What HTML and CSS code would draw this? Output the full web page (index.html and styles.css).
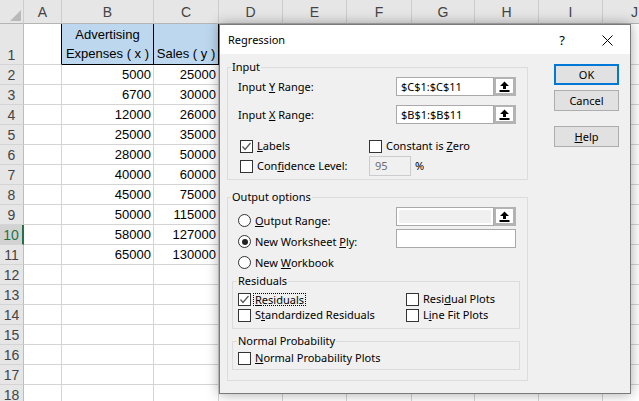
FILE: index.html
```html
<!DOCTYPE html>
<html>
<head>
<meta charset="utf-8">
<link rel="stylesheet" href="styles.css">
</head>
<body>
<div class="sheet">
  <div class="ch corner"><span class="tri"></span></div><div class="ch">A</div><div class="ch">B</div><div class="ch">C</div><div class="ch">D</div><div class="ch">E</div><div class="ch">F</div><div class="ch">G</div><div class="ch">H</div><div class="ch">I</div><div class="ch">J</div>

  <div class="rh rh1">1</div><div class="c bl"></div><div class="c hdr">Advertising<br>Expenses ( x )</div><div class="c hdr">Sales ( y )</div><div class="c"></div><div class="c"></div><div class="c"></div><div class="c"></div><div class="c"></div><div class="c"></div><div class="c"></div>

  <div class="rh">2</div><div class="c"></div><div class="c n">5000</div><div class="c n">25000</div><div class="c"></div><div class="c"></div><div class="c"></div><div class="c"></div><div class="c"></div><div class="c"></div><div class="c"></div>
  <div class="rh">3</div><div class="c"></div><div class="c n">6700</div><div class="c n">30000</div><div class="c"></div><div class="c"></div><div class="c"></div><div class="c"></div><div class="c"></div><div class="c"></div><div class="c"></div>
  <div class="rh">4</div><div class="c"></div><div class="c n">12000</div><div class="c n">26000</div><div class="c"></div><div class="c"></div><div class="c"></div><div class="c"></div><div class="c"></div><div class="c"></div><div class="c"></div>
  <div class="rh">5</div><div class="c"></div><div class="c n">25000</div><div class="c n">35000</div><div class="c"></div><div class="c"></div><div class="c"></div><div class="c"></div><div class="c"></div><div class="c"></div><div class="c"></div>
  <div class="rh">6</div><div class="c"></div><div class="c n">28000</div><div class="c n">50000</div><div class="c"></div><div class="c"></div><div class="c"></div><div class="c"></div><div class="c"></div><div class="c"></div><div class="c"></div>
  <div class="rh">7</div><div class="c"></div><div class="c n">40000</div><div class="c n">60000</div><div class="c"></div><div class="c"></div><div class="c"></div><div class="c"></div><div class="c"></div><div class="c"></div><div class="c"></div>
  <div class="rh">8</div><div class="c"></div><div class="c n">45000</div><div class="c n">75000</div><div class="c"></div><div class="c"></div><div class="c"></div><div class="c"></div><div class="c"></div><div class="c"></div><div class="c"></div>
  <div class="rh">9</div><div class="c"></div><div class="c n">50000</div><div class="c n">115000</div><div class="c"></div><div class="c"></div><div class="c"></div><div class="c"></div><div class="c"></div><div class="c"></div><div class="c"></div>
  <div class="rh sel">10</div><div class="c"></div><div class="c n">58000</div><div class="c n">127000</div><div class="c"></div><div class="c"></div><div class="c"></div><div class="c"></div><div class="c"></div><div class="c"></div><div class="c"></div>
  <div class="rh">11</div><div class="c"></div><div class="c n">65000</div><div class="c n">130000</div><div class="c"></div><div class="c"></div><div class="c"></div><div class="c"></div><div class="c"></div><div class="c"></div><div class="c"></div>
  <div class="rh">12</div><div class="c"></div><div class="c"></div><div class="c"></div><div class="c"></div><div class="c"></div><div class="c"></div><div class="c"></div><div class="c"></div><div class="c"></div><div class="c"></div>
  <div class="rh">13</div><div class="c"></div><div class="c"></div><div class="c"></div><div class="c"></div><div class="c"></div><div class="c"></div><div class="c"></div><div class="c"></div><div class="c"></div><div class="c"></div>
  <div class="rh">14</div><div class="c"></div><div class="c"></div><div class="c"></div><div class="c"></div><div class="c"></div><div class="c"></div><div class="c"></div><div class="c"></div><div class="c"></div><div class="c"></div>
  <div class="rh">15</div><div class="c"></div><div class="c"></div><div class="c"></div><div class="c"></div><div class="c"></div><div class="c"></div><div class="c"></div><div class="c"></div><div class="c"></div><div class="c"></div>
  <div class="rh">16</div><div class="c"></div><div class="c"></div><div class="c"></div><div class="c"></div><div class="c"></div><div class="c"></div><div class="c"></div><div class="c"></div><div class="c"></div><div class="c"></div>
  <div class="rh">17</div><div class="c"></div><div class="c"></div><div class="c"></div><div class="c"></div><div class="c"></div><div class="c"></div><div class="c"></div><div class="c"></div><div class="c"></div><div class="c"></div>
  <div class="rh">18</div><div class="c"></div><div class="c"></div><div class="c"></div><div class="c"></div><div class="c"></div><div class="c"></div><div class="c"></div><div class="c"></div><div class="c"></div><div class="c"></div>
</div>

<div class="dlg">
  <div class="title">
    <span class="ttext">Regression</span>
    <span class="q">?</span>
    <svg class="close" width="11" height="11" viewBox="0 0 11 11"><path d="M0.5 0.5 L10.5 10.5 M10.5 0.5 L0.5 10.5" stroke="#000" stroke-width="1" fill="none"/></svg>
  </div>
  <div class="body">
    <div class="left">
      <fieldset class="grp main">
        <legend>Input</legend>
        <div class="rrow r1">
          <span class="lbl">Input <u>Y</u> Range:</span>
          <span class="field"><span class="tb">$C$1:$C$11</span><span class="ub"><svg width="11" height="11" viewBox="0 0 11 11"><path d="M5.5 0.5 L10 5 L7 5 L7 8 L4 8 L4 5 L1 5 Z" fill="#000"/><rect x="0.5" y="9" width="10" height="2" fill="#000"/></svg></span></span>
        </div>
        <div class="rrow r2">
          <span class="lbl">Input <u>X</u> Range:</span>
          <span class="field"><span class="tb">$B$1:$B$11</span><span class="ub"><svg width="11" height="11" viewBox="0 0 11 11"><path d="M5.5 0.5 L10 5 L7 5 L7 8 L4 8 L4 5 L1 5 Z" fill="#000"/><rect x="0.5" y="9" width="10" height="2" fill="#000"/></svg></span></span>
        </div>
        <div class="opts">
          <div class="chk"><span class="box"><svg width="11" height="11" viewBox="0 0 11 11"><path d="M1.5 5.5 L4 8.5 L9.5 2" fill="none" stroke="#555" stroke-width="1.2"/></svg></span><span><u>L</u>abels</span></div>
          <div class="chk"><span class="box"></span><span>Constant is <u>Z</u>ero</span></div>
          <div class="chk"><span class="box"></span><span>Con<u>f</u>idence Level:</span></div>
          <div class="conf"><span class="tb95">95</span><span>%</span></div>
        </div>
      </fieldset>

      <fieldset class="grp main out">
        <legend>Output options</legend>
        <div class="ob">
          <div class="radios">
            <div class="rad"><span class="rb"></span><span><u>O</u>utput Range:</span></div>
            <div class="rad"><span class="rb on"></span><span>New Worksheet <u>P</u>ly:</span></div>
            <div class="rad"><span class="rb"></span><span>New <u>W</u>orkbook</span></div>
          </div>
          <div class="tbs">
            <span class="field"><span class="tb dis"></span><span class="ub"><svg width="11" height="11" viewBox="0 0 11 11"><path d="M5.5 0.5 L10 5 L7 5 L7 8 L4 8 L4 5 L1 5 Z" fill="#000"/><rect x="0.5" y="9" width="10" height="2" fill="#000"/></svg></span></span>
            <span class="tb wide"></span>
          </div>
        </div>
        <fieldset class="grp sub res">
          <legend>Residuals</legend>
          <div class="rgrid">
            <div class="chk"><span class="box"><svg width="11" height="11" viewBox="0 0 11 11"><path d="M1.5 5.5 L4 8.5 L9.5 2" fill="none" stroke="#555" stroke-width="1.2"/></svg></span><span class="focus"><u>R</u>esiduals</span></div>
            <div class="chk"><span class="box"></span><span>Resi<u>d</u>ual Plots</span></div>
            <div class="chk"><span class="box"></span><span>S<u>t</u>andardized Residuals</span></div>
            <div class="chk"><span class="box"></span><span>L<u>i</u>ne Fit Plots</span></div>
          </div>
        </fieldset>
        <fieldset class="grp sub np">
          <legend>Normal Probability</legend>
          <div class="chk nprow"><span class="box"></span><span><u>N</u>ormal Probability Plots</span></div>
        </fieldset>
      </fieldset>
    </div>
    <div class="btns">
      <div class="btn ok">OK</div>
      <div class="btn cancel">Cancel</div>
      <div class="btn helpb"><span><u>H</u>elp</span></div>
    </div>
  </div>
</div>
</body>
</html>
```

FILE: styles.css
```css
* { box-sizing: border-box; }
html, body { margin: 0; padding: 0; }
body {
  width: 639px;
  height: 401px;
  overflow: hidden;
  position: relative;
  background: #fff;
  font-family: "Liberation Sans", Arial, sans-serif;
}

/* ---------- spreadsheet ---------- */
.sheet {
  display: grid;
  grid-template-columns: 24px 38px 92px 65px 64px 64px 65px 63px 64px 64px 64px;
  grid-template-rows: 24px 41px repeat(17, 20px);
  font-size: 13px;
  color: #000;
}
.sheet > div {
  border-right: 1px solid #d4d4d4;
  border-bottom: 1px solid #d4d4d4;
  white-space: nowrap;
  overflow: hidden;
}
.sheet > .ch {
  background: #e6e6e6;
  border-right-color: #cdcdcd;
  border-bottom-color: #b5b5b5;
  display: flex;
  align-items: center;
  justify-content: center;
  color: #444;
  font-size: 14px;
}
.sheet > .corner {
  align-items: flex-end;
  justify-content: flex-end;
  padding: 0 2px 2px 0;
}
.tri {
  width: 0;
  height: 0;
  border-left: 11px solid transparent;
  border-bottom: 11px solid #b9b9b9;
}
.sheet > .rh {
  background: #e6e6e6;
  border-right-color: #bdbdbd;
  border-bottom-color: #d4d4d4;
  display: flex;
  align-items: center;
  justify-content: center;
  color: #444;
  font-size: 14px;
}
.sheet > .rh1 { align-items: flex-end; padding-bottom: 1px; }
.sheet > .sel {
  background: #d2d2d2;
  border-right: 2px solid #217346;
  color: #217346;
}
.sheet > .n {
  display: flex;
  align-items: center;
  justify-content: flex-end;
  padding-right: 2px;
}
.sheet > .bl { border-right-color: #000; }
.sheet > .hdr {
  background: #bdd7ee;
  border-right-color: #000;
  border-bottom-color: #000;
  display: flex;
  flex-direction: column;
  justify-content: flex-end;
  align-items: center;
  line-height: 19px;
  padding-bottom: 1px;
  text-align: center;
}

/* ---------- dialog ---------- */
.dlg {
  position: absolute;
  left: 219px;
  top: 24px;
  width: 412px;
  height: 370px;
  border: 1px solid #7a7a7a;
  background: #f0f0f0;
  box-shadow: 0 0 12px rgba(0, 0, 0, 0.35);
  font-family: "Noto Sans", "Open Sans", sans-serif;
  font-size: 11px;
  line-height: 14px;
  color: #000;
}
.title {
  height: 29px;
  background: #fff;
  display: flex;
  align-items: center;
  padding: 1px 0 0 8px;
}
.ttext { flex: 1; }
.q { font-size: 13px; margin-right: 37px; }
.close { margin-right: 17px; }

.body {
  display: flex;
  align-items: flex-start;
  padding: 6px 0 0 7px;
}
.left { width: 301px; }

.grp {
  margin: 0;
  border: 1px solid #dcdcdc;
  min-width: 0;
}
.grp > legend {
  padding: 0 1px;
  line-height: 14px;
}
.main { width: 301px; padding: 0 0 3px 3px; }
.out { margin-top: 10px; padding-bottom: 10px; }
.sub { width: 288px; margin-left: 1px; padding: 0 0 5px 4px; }
.res { margin-top: 1px; }
.np { margin-top: 5px; padding-bottom: 3px; }

.rrow {
  display: flex;
  align-items: center;
  height: 19px;
  margin-left: 7px;
}
.r1 { margin-top: 3px; }
.r2 { margin-top: 9px; }
.lbl { width: 158px; }
.field { display: flex; }
.tb {
  width: 98px;
  height: 19px;
  border: 1px solid #a9a9a9;
  background: #fff;
  padding-left: 4px;
  display: flex;
  align-items: center;
}
.tb.dis {
  background: #f0f0f0;
  box-shadow: inset 0 0 0 2px #fff;
}
.tb.wide { width: 120px; }
.ub {
  width: 22px;
  height: 19px;
  border-style: solid;
  border-color: #b3b3b3;
  border-width: 2px 3px 3px 2px;
  background: #fff;
  display: flex;
  align-items: center;
  justify-content: center;
}

.opts {
  display: grid;
  grid-template-columns: 129px auto;
  grid-template-rows: 20px 20px;
  margin: 12px 0 0 9px;
}
.chk {
  display: flex;
  align-items: center;
  gap: 4px;
  white-space: nowrap;
}
.box {
  width: 13px;
  height: 13px;
  border: 1px solid #333;
  background: #fff;
  flex: none;
  display: flex;
}
.conf {
  display: flex;
  align-items: center;
  gap: 4px;
}
.tb95 {
  width: 42px;
  height: 20px;
  border: 1px solid #cccccc;
  background: #f0f0f0;
  color: #6d6d6d;
  padding-left: 5px;
  display: flex;
  align-items: center;
}

.ob { display: flex; margin-left: 7px; }
.radios { width: 158px; padding-top: 6px; }
.rad {
  height: 21px;
  display: flex;
  align-items: center;
  gap: 4px;
}
.rb {
  width: 13px;
  height: 13px;
  border: 1px solid #333;
  border-radius: 50%;
  background: #fff;
  flex: none;
  display: flex;
  align-items: center;
  justify-content: center;
}
.rb.on::after {
  content: "";
  width: 6px;
  height: 6px;
  border-radius: 50%;
  background: #222;
}
.tbs {
  padding-top: 3px;
  display: flex;
  flex-direction: column;
  gap: 3px;
}

.rgrid {
  display: grid;
  grid-template-columns: 168px auto;
  grid-auto-rows: 16px;
  margin: 3px 0 0 1px;
}
.focus {
  margin-left: -2px;
  padding: 0 1px;
  border: 1px dotted #000;
  line-height: 11px;
}
.nprow {
  height: 16px;
  margin: 2px 0 0 1px;
}

.btns {
  margin: 4px 0 0 26px;
  display: flex;
  flex-direction: column;
}
.btn {
  width: 65px;
  height: 21px;
  border: 1px solid #adadad;
  background: #e1e1e1;
  display: flex;
  align-items: center;
  justify-content: center;
}
.ok { border: 2px solid #0078d7; }
.cancel { margin-top: 5px; }
.helpb { margin-top: 15px; }
```
